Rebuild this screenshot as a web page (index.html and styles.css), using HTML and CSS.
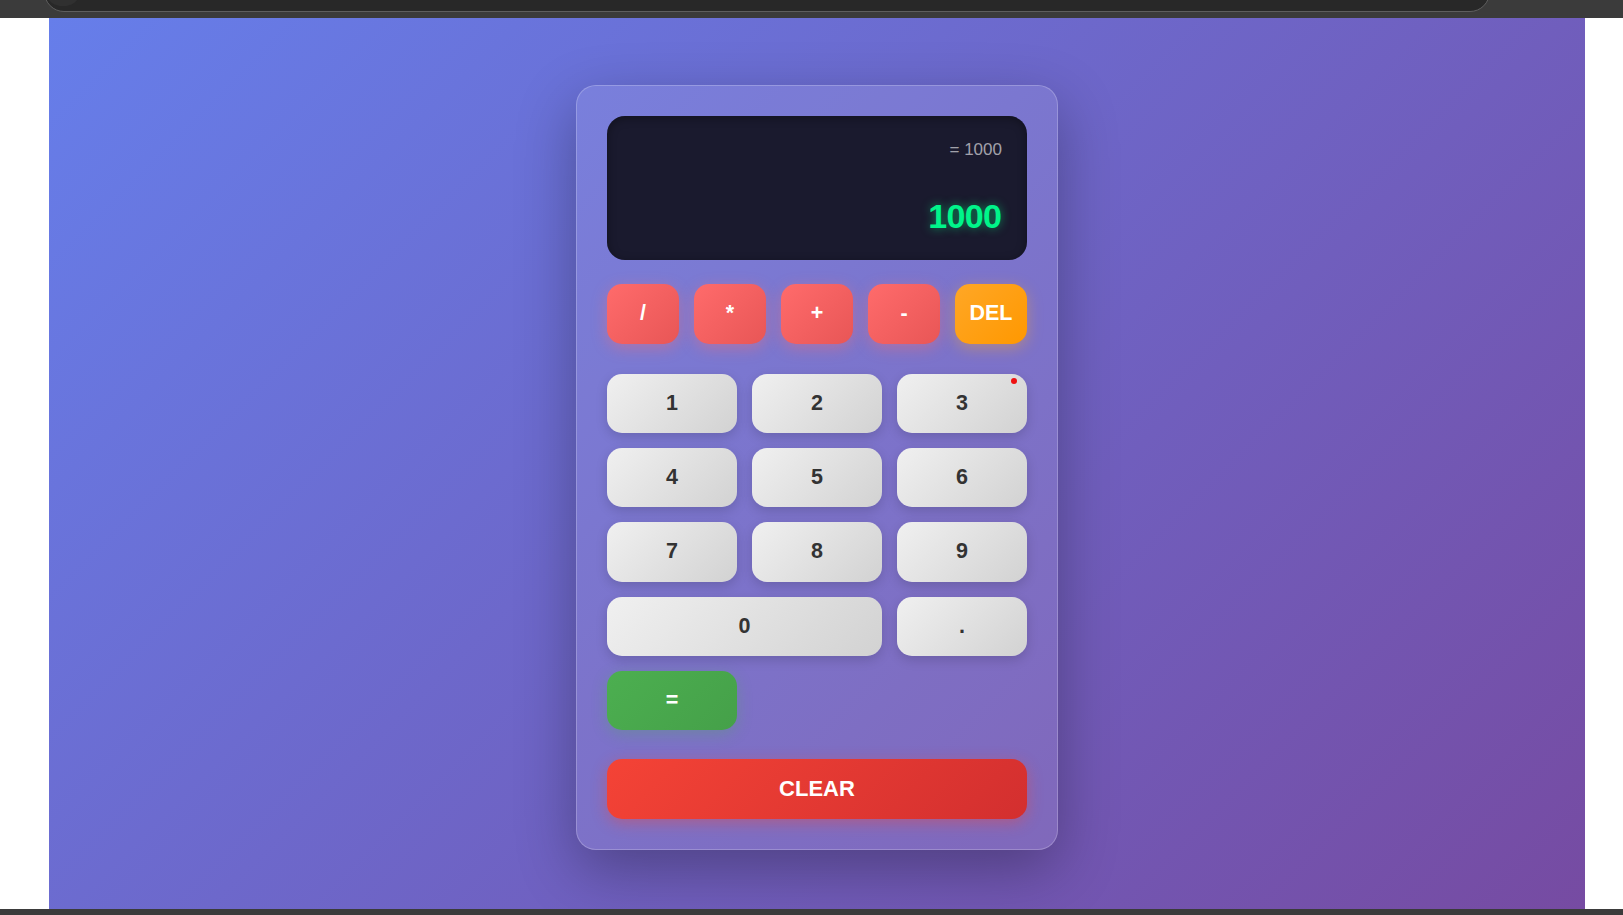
FILE: index.html
```html
<!DOCTYPE html>
<html lang="en">
<head>
<meta charset="utf-8">
<title>Calculator</title>
<link rel="stylesheet" href="styles.css">
</head>
<body>
  <div class="chrome-top">
    <div class="tab-pill"><span class="tab-dot"></span></div>
  </div>
  <div class="viewport">
    <main class="stage">
      <section class="calculator">
        <div class="display">
          <div class="previous">= 1000</div>
          <div class="current">1000</div>
        </div>
        <div class="operators">
          <button class="btn op">/</button>
          <button class="btn op">*</button>
          <button class="btn op">+</button>
          <button class="btn op">-</button>
          <button class="btn del">DEL</button>
        </div>
        <div class="keypad">
          <button class="btn num">1</button>
          <button class="btn num">2</button>
          <button class="btn num has-dot">3<span class="dot"></span></button>
          <button class="btn num">4</button>
          <button class="btn num">5</button>
          <button class="btn num">6</button>
          <button class="btn num">7</button>
          <button class="btn num">8</button>
          <button class="btn num">9</button>
          <button class="btn num zero">0</button>
          <button class="btn num">.</button>
          <button class="btn equals">=</button>
        </div>
        <button class="btn clear">CLEAR</button>
      </section>
    </main>
  </div>
  <div class="chrome-bottom"></div>
</body>
</html>
```

FILE: styles.css
```css
* { box-sizing: border-box; }

html, body {
  margin: 0;
  padding: 0;
  height: 915px;
  overflow: hidden;
  background: #ffffff;
  font-family: "Liberation Sans", Arial, sans-serif;
}

body {
  display: flex;
  flex-direction: column;
}

.chrome-top {
  height: 18px;
  flex: none;
  background: #3b3b3b;
  overflow: hidden;
  position: relative;
}

.tab-pill {
  margin-left: 44px;
  width: 1446px;
  height: 40px;
  margin-top: -28px;
  background: #282828;
  border: 1.5px solid #5e5e5e;
  border-radius: 22px;
  position: relative;
}

.tab-dot {
  position: absolute;
  left: 2px;
  top: 10px;
  width: 32px;
  height: 23px;
  border-radius: 50%;
  background: #303030;
}

.viewport {
  flex: 1;
  display: flex;
  padding-left: 49px;
}

.stage {
  width: 1536px;
  height: 891px;
  background: linear-gradient(135deg, #667eea 0%, #764ba2 100%);
  display: flex;
  justify-content: center;
  align-items: flex-start;
  padding-top: 67px;
}

.chrome-bottom {
  height: 6px;
  flex: none;
  background: #3b3b3b;
}

.calculator {
  width: 482px;
  padding: 30px;
  border: 1px solid rgba(255, 255, 255, 0.22);
  border-radius: 20px;
  background: rgba(255, 255, 255, 0.1);
  box-shadow: 0 20px 60px rgba(0, 0, 0, 0.3);
  display: flex;
  flex-direction: column;
}

.display {
  height: 144px;
  background: #1a1a2e;
  border-radius: 18px;
  padding: 24px 25px 23px;
  display: flex;
  flex-direction: column;
  justify-content: space-between;
  align-items: flex-end;
  box-shadow: inset 0 2px 10px rgba(0, 0, 0, 0.35);
  margin-bottom: 24px;
}

.previous {
  font-size: 17px;
  color: rgba(255, 255, 255, 0.6);
}

.current {
  font-size: 34px;
  font-weight: bold;
  letter-spacing: -0.6px;
  margin-right: 0.6px;
  color: #00f58a;
  text-shadow: 0 0 10px rgba(0, 255, 136, 0.5);
  line-height: 1.2;
}

.btn {
  border: none;
  font-family: "Liberation Sans", Arial, sans-serif;
  font-weight: bold;
  font-size: 21.5px;
  border-radius: 15px;
  padding: 0;
  cursor: pointer;
  display: flex;
  align-items: center;
  justify-content: center;
}

.operators {
  display: grid;
  grid-template-columns: repeat(5, 1fr);
  gap: 15px;
  margin-bottom: 30px;
}

.operators .btn {
  height: 59.5px;
  color: #ffffff;
}

.op {
  background: linear-gradient(135deg, #ff6b6b 0%, #e85656 100%);
  box-shadow: 0 4px 15px rgba(255, 107, 107, 0.4);
}

.del {
  background: linear-gradient(135deg, #ffa726 0%, #ff9800 100%);
  box-shadow: 0 4px 15px rgba(255, 167, 38, 0.4);
}

.keypad {
  display: grid;
  grid-template-columns: repeat(3, 1fr);
  grid-auto-rows: 59.4px;
  gap: 15px;
  margin-bottom: 29px;
}

.num {
  background: linear-gradient(135deg, #f0f0f0 0%, #d2d2d2 100%);
  color: #333333;
  box-shadow: 0 4px 12px rgba(0, 0, 0, 0.15);
  position: relative;
}

.zero {
  grid-column: span 2;
}

.dot {
  position: absolute;
  top: 4px;
  right: 10px;
  width: 6.5px;
  height: 6.5px;
  border-radius: 50%;
  background: #ee1111;
}

.equals {
  background: linear-gradient(135deg, #4caf50 0%, #45a049 100%);
  color: #ffffff;
  box-shadow: 0 4px 15px rgba(76, 175, 80, 0.3);
}

.clear {
  height: 60px;
  width: 100%;
  color: #ffffff;
  font-size: 22px;
  background: linear-gradient(135deg, #f44336 0%, #d32f2f 100%);
  box-shadow: 0 4px 15px rgba(244, 67, 54, 0.4);
}
```
